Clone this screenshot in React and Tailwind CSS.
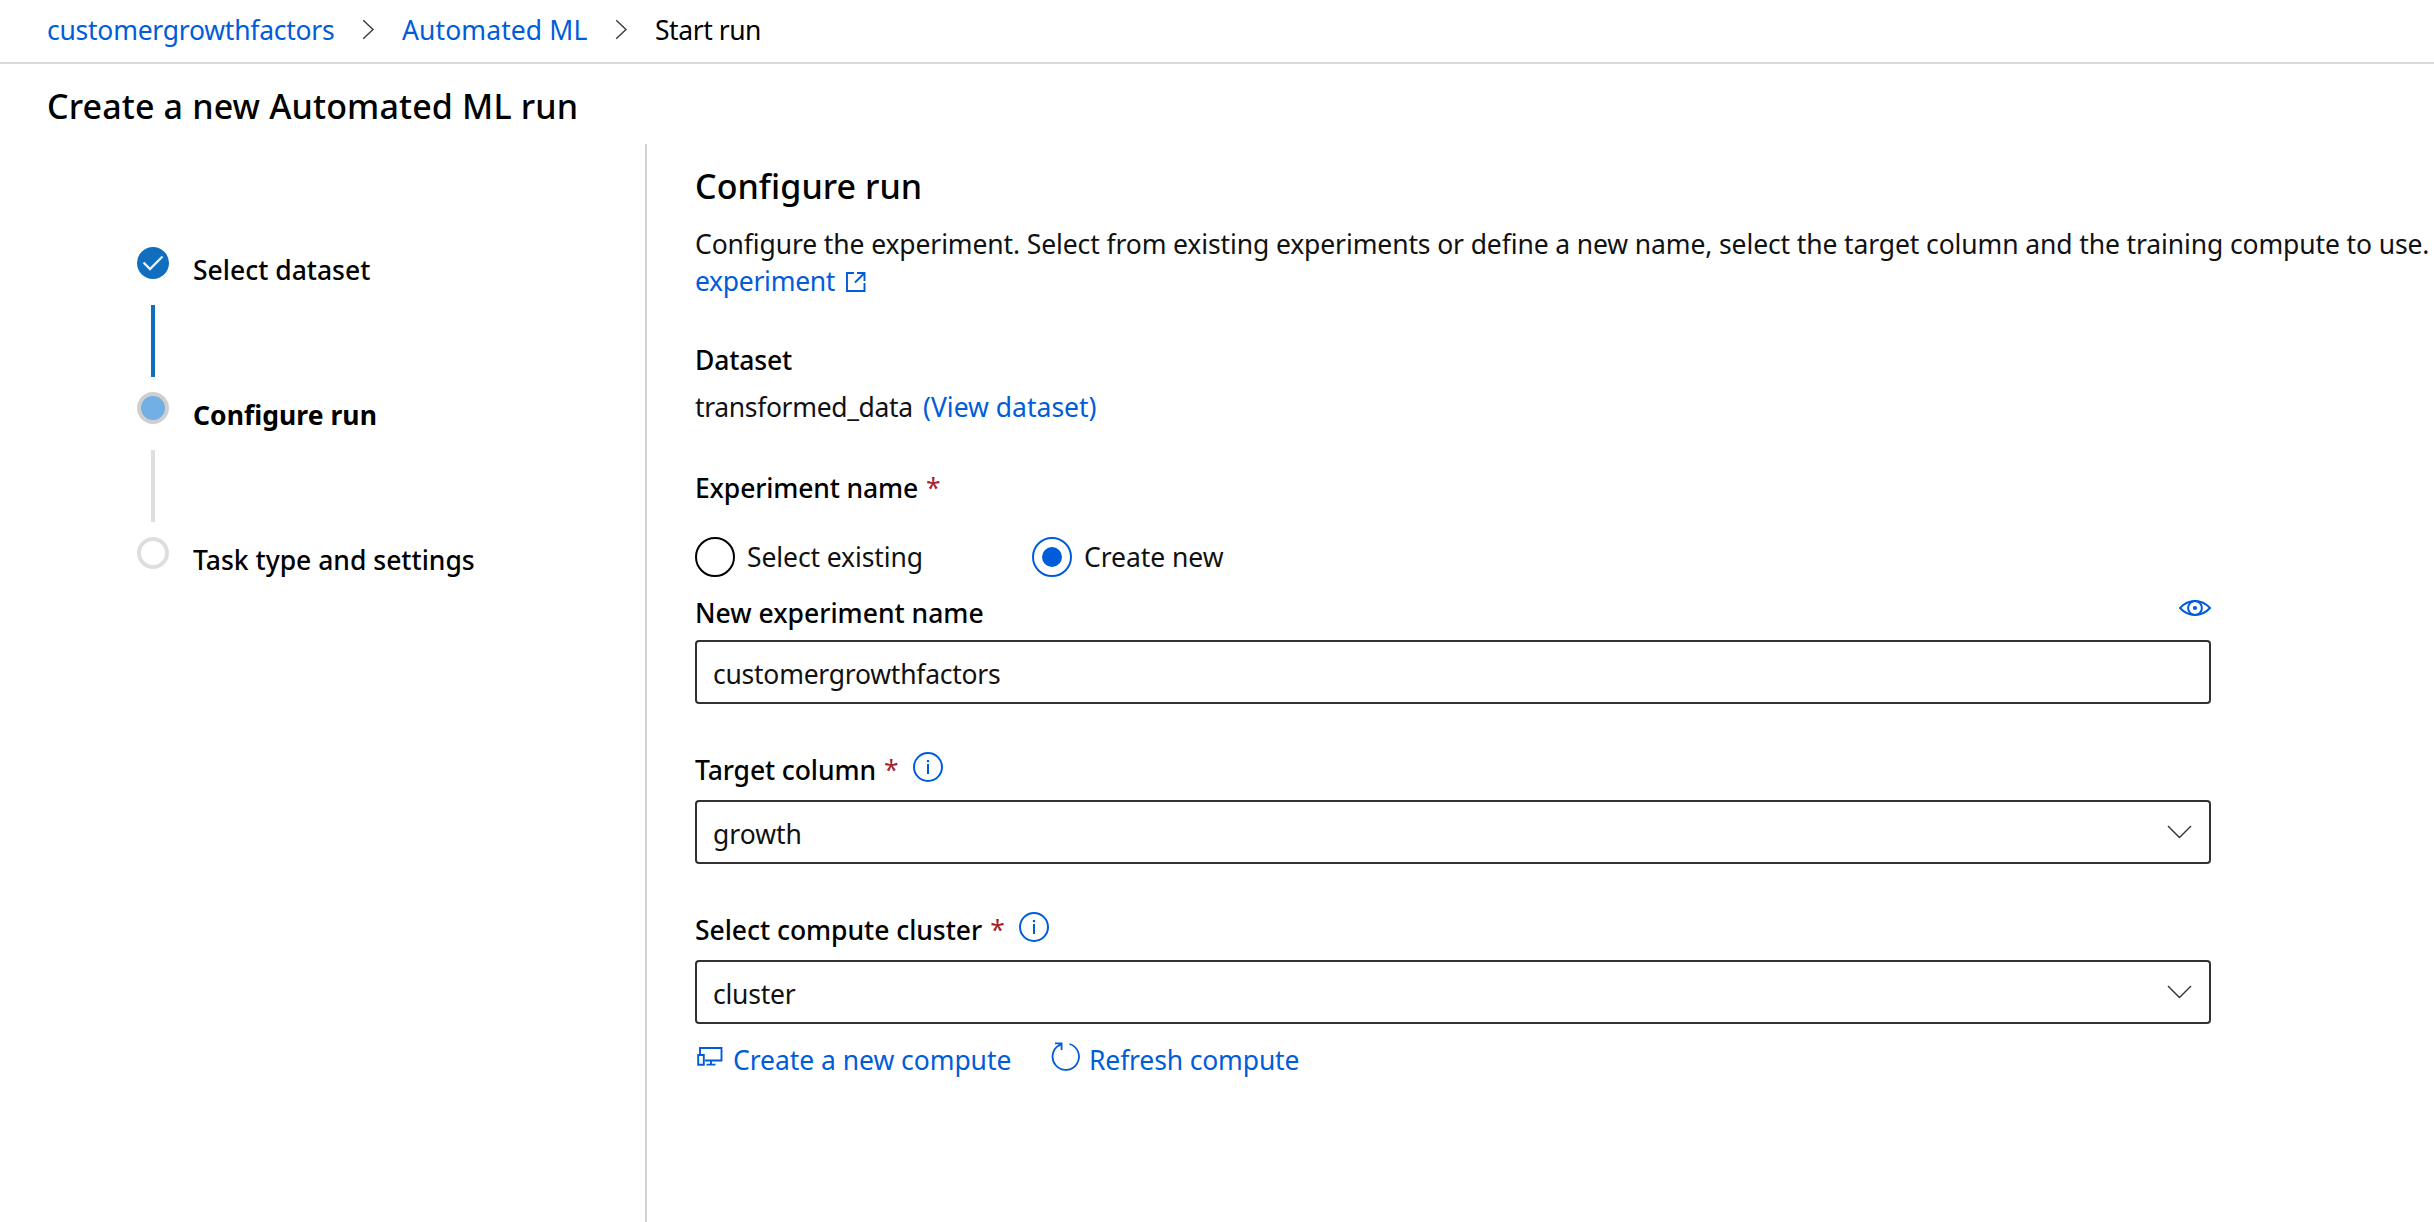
import React from "react";

const Separator = () => (
  <svg className="h-[21px] w-[13px]" viewBox="0 0 13 21" fill="none" stroke="#3b3a39" strokeWidth="1.4">
    <path d="M1.2 1.2 11 10.5 1.2 19.8" />
  </svg>
);

const ChevronDown = () => (
  <svg className="h-[14px] w-[25px]" viewBox="0 0 25 14" fill="none" stroke="#323130" strokeWidth="1.4">
    <path d="M1 1 12.5 12.4 24 1" />
  </svg>
);

const InfoIcon = () => (
  <svg className="h-[30px] w-[30px]" viewBox="0 0 30 30" fill="none" stroke="#015cda" strokeWidth="2">
    <circle cx="15" cy="15" r="14" />
    <path d="M15 12v10" />
    <path d="M15 8v2.2" strokeWidth="2.2" />
  </svg>
);

const EyeIcon = () => (
  <svg className="h-[16px] w-[32px]" viewBox="0 0 32 16" fill="none" stroke="#015cda" strokeWidth="2">
    <path d="M1 8C5.5 3.2 10.5 1 16 1s10.500 2.200 15 7c-4.500 4.800-9.500 7-15 7S5.500 12.800 1 8Z" />
    <circle cx="16" cy="8" r="6.900" />
    <circle cx="16" cy="8" r="2.100" fill="#015cda" stroke="none" />
  </svg>
);

const ExternalIcon = () => (
  <svg className="h-[20px] w-[20px]" viewBox="0 0 20 20" fill="none" stroke="#015cda" strokeWidth="1.9">
    <path d="M8 1H1v18h17.500v-8" />
    <path d="M11 1h7.500v8M18.500 1 9 10.500" />
  </svg>
);

const ComputeIcon = () => (
  <svg className="h-[19px] w-[26px]" viewBox="0 0 26 19" fill="none" stroke="#015cda" strokeWidth="1.9">
    <path d="M3 7V1h21.500v12.500H8" />
    <path d="M1.200 8h5.600v9.700H1.200z" />
    <path d="M14 13.500v4M9.500 17.600h9" />
  </svg>
);

const RefreshIcon = () => (
  <svg className="h-[29px] w-[30px]" viewBox="0 0 30 29" fill="none" stroke="#015cda" strokeWidth="1.8">
    <path d="M18.500 2A13.200 13.200 0 1 1 9 2.800" />
    <path d="M4 1.300h6.600V8M10.300 1.600 7.500 4.200" />
  </svg>
);

const Required = () => <span className="ml-[8px] w-[12px] font-normal text-[#a4262c]">*</span>;

const Label = ({ children, info, required, className = "" }) => (
  <div className={`flex h-9 items-start font-medium leading-9 ${className}`}>
    <span>{children}</span>
    {required && <Required />}
    {info && (
      <span className="ml-[17px]">
        <InfoIcon />
      </span>
    )}
  </div>
);

const Field = ({ children, dropdown, className = "" }) => (
  <div
    className={`flex h-16 w-[1516px] items-center justify-between rounded-[4px] border-2 border-[#323130] pl-[16px] pr-[17px] ${className}`}
  >
    <span className="pt-[5px] text-[#111111]">{children}</span>
    {dropdown && <ChevronDown />}
  </div>
);

const Step = ({ marker, children, line, className = "" }) => (
  <div className={`flex ${line ? "h-[145px]" : ""}`}>
    <div className="flex w-8 flex-col items-center">
      {marker}
      {line && <div className={`mt-[26px] h-[72px] w-1 ${line}`} />}
    </div>
    <span className={`ml-[24px] mt-[5px] h-9 leading-9 ${className}`}>{children}</span>
  </div>
);

export default function App() {
  return (
    <div className="flex h-[1222px] w-[2434px] flex-col overflow-hidden bg-white font-['Noto_Sans',sans-serif] text-[26.5px] text-black">
      <header className="flex h-16 items-center border-b-2 border-[#d9d9d9] pb-[2px] pl-[47px]">
        <a className="w-[289px] whitespace-nowrap pt-[1px] tracking-[-0.25px] text-[#015cda]">customergrowthfactors</a>
        <div className="ml-[26px] pb-[1px]"><Separator /></div>
        <a className="ml-[27px] w-[187px] whitespace-nowrap pt-[1px] tracking-[0.1px] text-[#015cda]">Automated ML</a>
        <div className="ml-[26px] pb-[1px]"><Separator /></div>
        <span className="ml-[27px] pt-[1px] tracking-[-0.45px]">Start run</span>
      </header>

      <h1 className="flex h-20 items-center pl-[47px] pt-[5px] text-[34px] font-medium tracking-[0.14px]">
        Create a new Automated ML run
      </h1>

      <div className="flex flex-1">
        <nav className="w-[647px] border-r-2 border-[#d2d2d2] pl-[137px] pt-[103px]">
          <Step
            className="font-medium"
            line="bg-[#106ebe]"
            marker={
              <div className="flex h-8 w-8 items-center justify-center rounded-full bg-[#106ebe]">
                <svg className="h-[16px] w-[22px]" viewBox="0 0 22 16" fill="none" stroke="#e8f1fa" strokeWidth="2.4">
                  <path d="M1.500 7.500 8 14 20.500 1.500" />
                </svg>
              </div>
            }
          >
            Select dataset
          </Step>
          <Step
            className="font-bold tracking-[0.05px]"
            line="bg-[#dededd]"
            marker={<div className="h-8 w-8 rounded-full border-4 border-[#d0cfce] bg-[#71afe5]" />}
          >
            Configure run
          </Step>
          <Step
            className="font-medium"
            marker={<div className="h-8 w-8 rounded-full border-4 border-[#dededd] bg-white" />}
          >
            Task type and settings
          </Step>
        </nav>

        <main className="flex-1 pl-12 pt-[18px]">
          <h2 className="h-12 text-[34px] font-medium leading-[48px] tracking-[0.05px]">Configure run</h2>

          <p className="mt-[16px] whitespace-nowrap leading-[37px] tracking-[-0.12px] text-[#111111]">
            Configure the experiment. Select from existing experiments or define a new name, select the target column and the training compute to use.
          </p>
          <a className="flex h-[37px] items-center leading-[37px] tracking-[-0.3px] text-[#015cda]">
            experiment
            <span className="ml-[11px]"><ExternalIcon /></span>
          </a>

          <Label className="mt-[42px] tracking-[-0.15px]">Dataset</Label>
          <div className="mt-[11px] flex h-9 leading-9 text-[#111111]">
            <span className="w-[228px] tracking-[-0.35px]">transformed_data</span>
            <a className="text-[#015cda]">(View dataset)</a>
          </div>

          <Label required className="mt-[45px] tracking-[-0.15px]">Experiment name</Label>
          <div className="mt-[31px] flex h-10 items-center text-[#111111]">
            <div className="flex w-[337px] items-center gap-[12px]">
              <span className="h-10 w-10 rounded-full border-2 border-black" />
              <span className="pt-[2px] tracking-[-0.1px]">Select existing</span>
            </div>
            <div className="flex items-center gap-[12px]">
              <span className="flex h-10 w-10 items-center justify-center rounded-full border-2 border-[#015cda]">
                <span className="h-5 w-5 rounded-full bg-[#015cda]" />
              </span>
              <span className="pt-[2px] tracking-[-0.05px]">Create new</span>
            </div>
          </div>

          <div className="mt-[18px] flex w-[1516px] justify-between">
            <Label>New experiment name</Label>
            <div className="pt-[5px]"><EyeIcon /></div>
          </div>
          <Field className="mt-[9px] tracking-[-0.25px]">customergrowthfactors</Field>

          <Label required info className="mt-12 tracking-[-0.1px]">Target column</Label>
          <Field dropdown className="mt-3">growth</Field>

          <Label required info className="mt-12 tracking-[-0.04px]">Select compute cluster</Label>
          <Field dropdown className="mt-3 tracking-[-0.25px]">cluster</Field>

          <div className="mt-[18px] flex h-9 items-start leading-9 text-[#015cda]">
            <span className="ml-[2px] mt-[5px]"><ComputeIcon /></span>
            <a className="ml-[10px] w-[280px] whitespace-nowrap tracking-[-0.05px]">Create a new compute</a>
            <span className="ml-[38px]"><RefreshIcon /></span>
            <a className="ml-[8px] tracking-[-0.15px]">Refresh compute</a>
          </div>
        </main>
      </div>
    </div>
  );
}
